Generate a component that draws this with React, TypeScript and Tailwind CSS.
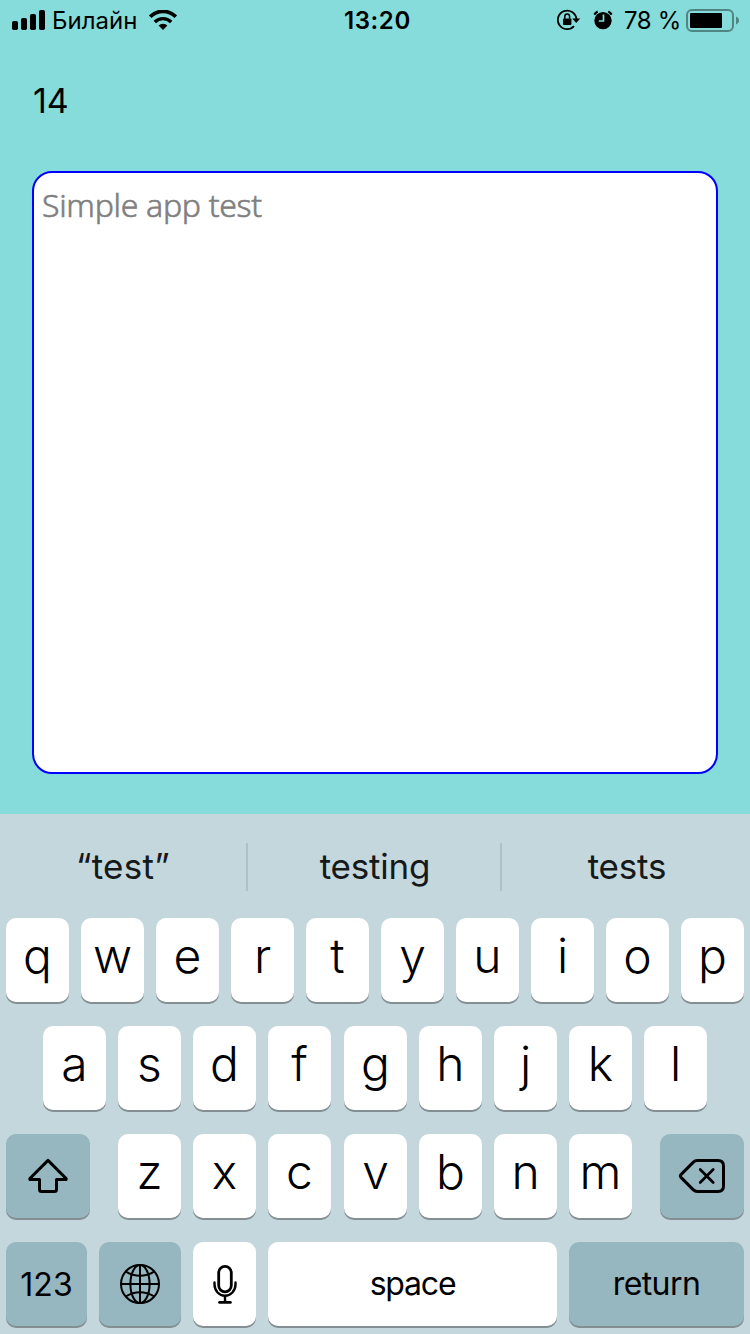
import type { ReactNode } from 'react';
import { clsx } from 'clsx';

function SignalIcon() {
  return (
    <svg className="block h-5 w-[33px]" viewBox="0 0 33 20">
      <rect x="0" y="11" width="6" height="9" rx="1.8" />
      <rect x="9" y="8" width="6" height="12" rx="1.8" />
      <rect x="18" y="4" width="6" height="16" rx="1.8" />
      <rect x="27" y="0" width="6" height="20" rx="1.8" />
    </svg>
  );
}

function WifiIcon() {
  return (
    <svg className="block h-5 w-7" viewBox="0 0 28 20" fill="none" stroke="#000">
      <path d="M1.2 6.6 A18.2 18.2 0 0 1 26.8 6.6" strokeWidth="3.7" />
      <path d="M5.8 12 A11.6 11.6 0 0 1 22.2 12" strokeWidth="3.4" />
      <path d="M14 20 L9.6 15.6 A6.3 6.3 0 0 1 18.4 15.6 Z" fill="#000" stroke="none" />
    </svg>
  );
}

function RotationLockIcon() {
  return (
    <svg className="block h-[22px] w-6" viewBox="0 0 24 22">
      <path d="M17 17.2 A9.3 9.3 0 1 1 19.4 10" fill="none" stroke="#000" strokeWidth="1.8" />
      <path d="M15.2 9.4 H23.2 L19.2 14 Z" />
      <rect x="6" y="9.4" width="8.4" height="6.6" rx="0.9" />
      <path d="M7.8 9.8 V7.4 A2.4 2.4 0 0 1 12.6 7.4 V9.8" fill="none" stroke="#000" strokeWidth="1.5" />
    </svg>
  );
}

function AlarmIcon() {
  return (
    <svg className="block h-5 w-5" viewBox="0 0 20 20">
      <circle cx="10" cy="10.6" r="8.7" />
      <path d="M1.3 4.6 A9 9 0 0 1 4.7 1.5" fill="none" stroke="#000" strokeWidth="2" />
      <path d="M15.3 1.5 A9 9 0 0 1 18.7 4.6" fill="none" stroke="#000" strokeWidth="2" />
      <path d="M10.5 4.6 V11 H5.8" fill="none" stroke="#86dcda" strokeWidth="1.7" />
    </svg>
  );
}

function BatteryIcon() {
  return (
    <svg className="block h-6 w-[54px]" viewBox="0 0 54 24">
      <rect x="1" y="1" width="46" height="21" rx="5" fill="none" stroke="#518583" strokeWidth="2" />
      <rect x="4" y="4" width="32" height="15" rx="1" />
      <path d="M50 7.5 C54 9 54 14 50 15.5 Z" fill="#518583" />
    </svg>
  );
}

function StatusBar() {
  return (
    <header className="flex h-10 items-center pl-3 text-[24px] leading-10">
      <div className="flex w-[332px] items-center">
        <SignalIcon />
        <span className="ml-[7px] w-[97px] pt-[2px] leading-[38px]">Билайн</span>
        <WifiIcon />
      </div>
      <span className="w-[213px] pt-[2px] font-semibold leading-[38px] tracking-[0.6px]">13:20</span>
      <RotationLockIcon />
      <span className="ml-3">
        <AlarmIcon />
      </span>
      <span className="ml-[11px] w-[62px] whitespace-nowrap pt-[2px] leading-[38px] tracking-[-0.4px]">78 %</span>
      <span className="pt-[2px]">
        <BatteryIcon />
      </span>
    </header>
  );
}

function ShiftIcon() {
  return (
    <svg className="block h-9 w-10" viewBox="0 0 40 36" fill="none" stroke="#000" strokeWidth="3" strokeLinejoin="round">
      <path d="M20 2.4 L1.9 20.5 Q1.5 21.6 2.6 21.6 H11.5 V31.5 Q11.5 33.6 13.6 33.6 H26.4 Q28.5 33.6 28.5 31.5 V21.6 H37.4 Q38.5 21.6 38.1 20.5 Z" />
    </svg>
  );
}

function DeleteIcon() {
  return (
    <svg
      className="block h-9 w-12"
      viewBox="0 0 48 36"
      fill="none"
      stroke="#000"
      strokeWidth="3"
      strokeLinecap="round"
      strokeLinejoin="round"
    >
      <path d="M19.2 2.5 H40 Q45.5 2.5 45.5 8 V28 Q45.5 33.5 40 33.5 H19.2 Q17 33.5 15.4 31.9 L3.2 19.6 Q1.7 18 3.2 16.4 L15.4 4.1 Q17 2.5 19.2 2.5 Z" />
      <path d="M22.2 11.5 L35.2 24.5 M35.2 11.5 L22.2 24.5" strokeWidth="2.7" />
    </svg>
  );
}

function GlobeIcon() {
  return (
    <svg className="block size-10" viewBox="0 0 40 40" fill="none" stroke="#000" strokeWidth="2">
      <circle cx="20" cy="20" r="19" />
      <path d="M20 1 V39 M1 20 H39" />
      <ellipse cx="20" cy="20" rx="9.6" ry="19" />
      <path d="M5.8 7.6 Q20 16 34.2 7.6 M5.8 32.4 Q20 24 34.2 32.4" />
    </svg>
  );
}

function MicIcon() {
  return (
    <svg className="block h-10 w-6" viewBox="0 0 24 40" fill="none" stroke="#000" strokeWidth="2.8" strokeLinecap="round">
      <rect x="5.7" y="2.4" width="12.6" height="25.4" rx="6.3" />
      <path d="M1.5 18.5 V20.5 A10.5 11.3 0 0 0 22.5 20.5 V18.5" strokeWidth="2.4" />
      <path d="M12 32 V38" strokeWidth="2.4" strokeLinecap="butt" />
      <path d="M6.6 38.4 H17.4" />
    </svg>
  );
}

function Key({ className, children }: { className?: string; children: ReactNode }) {
  return (
    <button
      type="button"
      className={clsx(
        'flex h-[84px] shrink-0 items-center justify-center rounded-[10px] shadow-[0_2px_0_#838f93]',
        className,
      )}
    >
      {children}
    </button>
  );
}

function LetterKeys({ letters, wideGapBefore }: { letters: string; wideGapBefore?: string }) {
  return (
    <div className="flex gap-3">
      {letters.split('').map((letter) => (
        <Key
          key={letter}
          className={clsx('w-[63px] bg-white pb-[8px] text-[48px] font-[350] leading-none', letter === wideGapBefore && 'ml-px')}
        >
          {letter}
        </Key>
      ))}
    </div>
  );
}

function Suggestions() {
  return (
    <div className="flex h-[104px] items-center pt-[2px] text-[35px] text-[#15191a]">
      <span className="w-[246px] pb-[2px] text-center tracking-[0.3px]">“test”</span>
      <span className="h-12 w-[2px] bg-[#afc1c6]" />
      <span className="w-[252px] pb-[2px] pl-[2px] text-center tracking-[-0.2px]">testing</span>
      <span className="h-12 w-[2px] bg-[#afc1c6]" />
      <span className="w-[248px] pb-[2px] pl-[2px] text-center tracking-[-0.2px]">tests</span>
    </div>
  );
}

function Keyboard() {
  return (
    <section className="h-[520px] bg-[#c4d7dd]">
      <Suggestions />
      <div className="flex flex-col gap-6">
        <div className="flex pl-[6px]">
          <LetterKeys letters="qwertyuiop" />
        </div>
        <div className="flex pl-[43px]">
          <LetterKeys letters="asdfghjkl" wideGapBefore="g" />
        </div>
        <div className="flex justify-between px-[6px]">
          <Key className="w-[84px] bg-[#96b6c0]">
            <ShiftIcon />
          </Key>
          <LetterKeys letters="zxcvbnm" wideGapBefore="v" />
          <Key className="w-[84px] bg-[#96b6c0]">
            <DeleteIcon />
          </Key>
        </div>
        <div className="flex gap-3 pl-[6px] text-[32px] leading-none">
          <Key className="w-[81px] bg-[#96b6c0] pt-[2px]">123</Key>
          <Key className="w-[82px] bg-[#96b6c0]">
            <GlobeIcon />
          </Key>
          <Key className="w-[63px] bg-white">
            <MicIcon />
          </Key>
          <Key className="w-[289px] bg-white pb-px tracking-[-1.2px]">space</Key>
          <Key className="w-[175px] bg-[#96b6c0] pb-px tracking-[-0.6px]">return</Key>
        </div>
      </div>
    </section>
  );
}

export default function App() {
  return (
    <div className="flex h-[1334px] w-[750px] flex-col overflow-hidden bg-[#86dcda] font-['Inter',sans-serif] text-black">
      <StatusBar />
      <main className="flex flex-1 flex-col px-8 pb-10 pt-10">
        <p className="h-[91px] pl-px pt-px text-[34px] leading-10">14</p>
        <div className="flex-1 rounded-[20px] border-2 border-[#0000ff] bg-white px-2 pt-3 font-['Noto_Sans',sans-serif] text-[32px] font-light leading-10 tracking-[-0.3px] text-[#808080] [-webkit-text-stroke:0.6px_#808080]">
          Simple app test
        </div>
      </main>
      <Keyboard />
    </div>
  );
}
